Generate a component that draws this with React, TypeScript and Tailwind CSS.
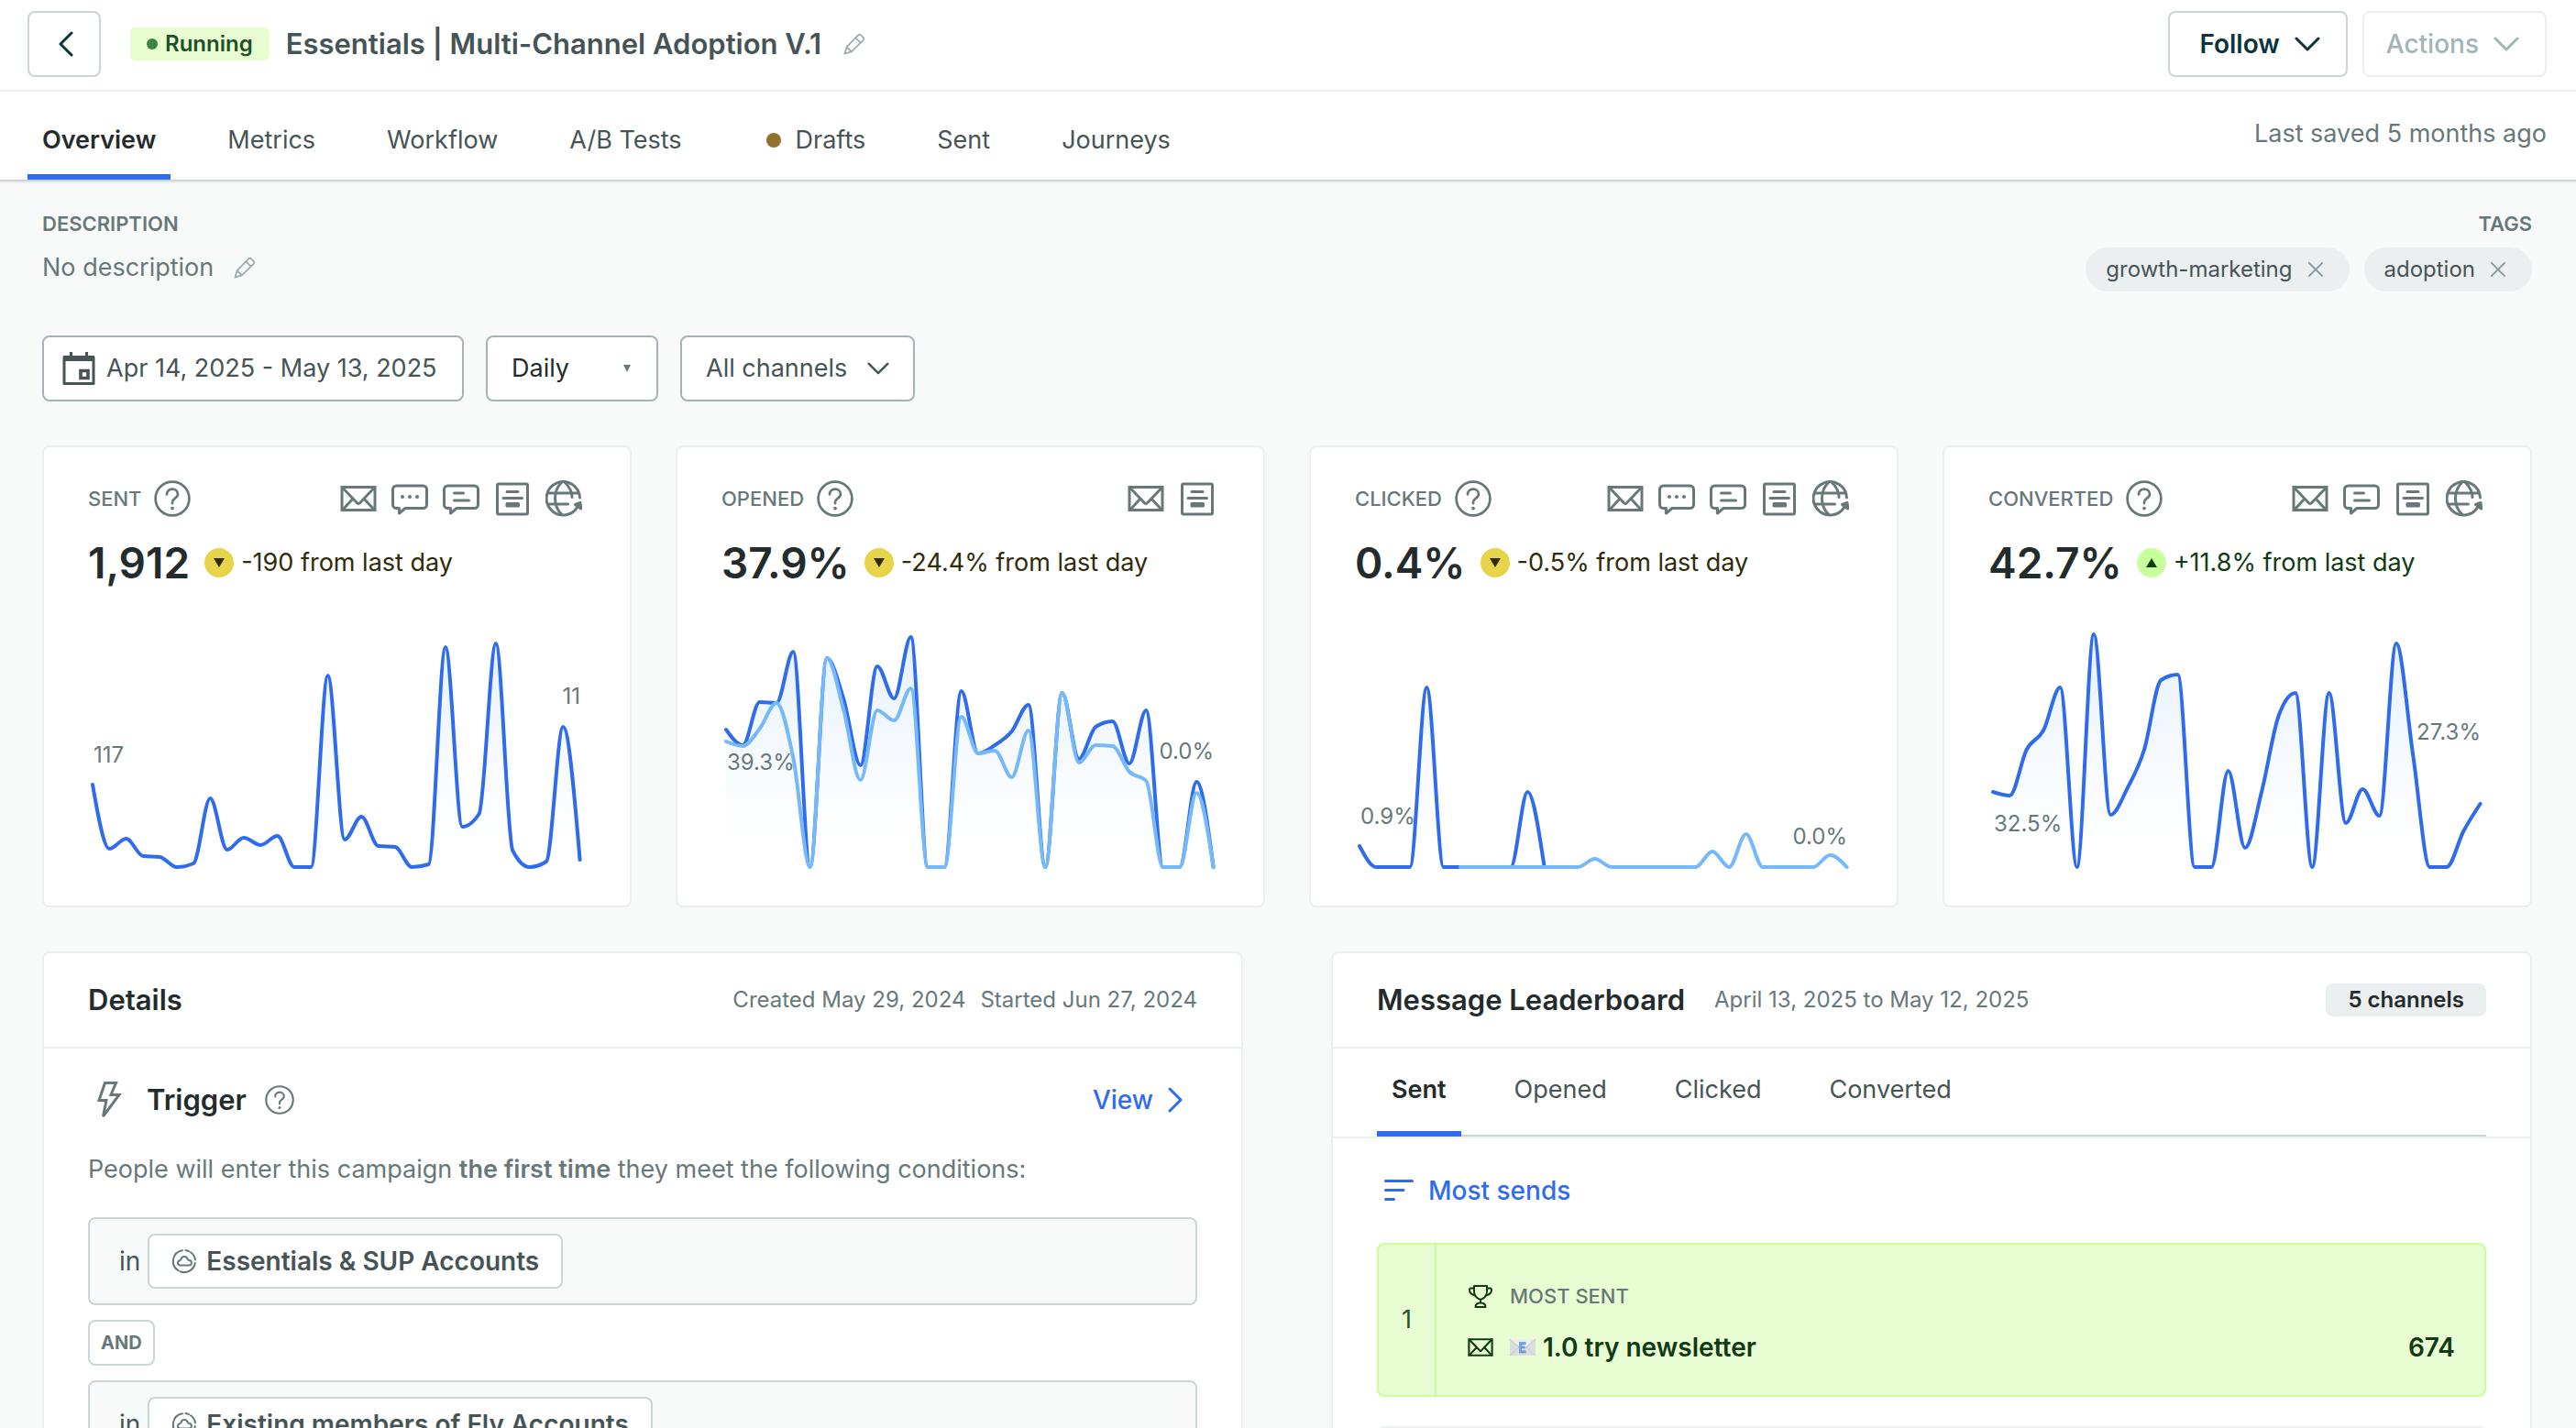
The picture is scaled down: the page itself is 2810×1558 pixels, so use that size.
import { useState } from 'react';
import type { ReactNode } from 'react';

type Channel = 'email' | 'sms' | 'push' | 'inApp' | 'webhook';

interface Label {
  text: string;
  y: number;
}

interface Metric {
  id: string;
  title: string;
  value: string;
  trend: 'up' | 'down';
  change: string;
  channels: Channel[];
  series: number[];
  secondary?: number[];
  secondaryFrom?: number;
  first: Label;
  last: Label;
}

const tabs = ['Overview', 'Metrics', 'Workflow', 'A/B Tests', 'Drafts', 'Sent', 'Journeys'];
const boardTabs = ['Sent', 'Opened', 'Clicked', 'Converted'];
const tags = ['growth-marketing', 'adoption'];
const segments = ['Essentials & SUP Accounts', 'Existing members of Fly Accounts'];

const metrics: Metric[] = [
  {
    id: 'sent',
    title: 'SENT',
    value: '1,912',
    trend: 'down',
    change: '-190 from last day',
    channels: ['email', 'sms', 'push', 'inApp', 'webhook'],
    series: [90, 20, 31, 12, 11, 0, 4, 75, 19, 32, 24, 34, 0, 0, 209, 30, 55, 23, 22, 0, 3, 240, 44, 58, 244, 18, 0, 6, 153, 8],
    first: { text: '117', y: 152 },
    last: { text: '11', y: 88 },
  },
  {
    id: 'opened',
    title: 'OPENED',
    value: '37.9%',
    trend: 'down',
    change: '-24.4% from last day',
    channels: ['email', 'inApp'],
    series: [150, 133, 180, 179, 235, 0, 228, 183, 111, 219, 184, 251, 0, 0, 192, 124, 133, 148, 177, 0, 190, 118, 153, 159, 113, 171, 0, 0, 93, 0],
    secondary: [137, 132, 151, 179, 119, 0, 228, 171, 95, 171, 160, 195, 0, 0, 164, 124, 127, 98, 149, 0, 190, 114, 133, 132, 104, 94, 0, 0, 81, 0],
    first: { text: '39.3%', y: 160 },
    last: { text: '0.0%', y: 148 },
  },
  {
    id: 'clicked',
    title: 'CLICKED',
    value: '0.4%',
    trend: 'down',
    change: '-0.5% from last day',
    channels: ['email', 'sms', 'push', 'inApp', 'webhook'],
    series: [23, 0, 0, 0, 196, 0, 0, 0, 0, 0, 82, 0],
    secondary: [0, 0, 0, 0, 0, 0, 0, 0, 9, 0, 0, 0, 0, 0, 0, 17, 0, 36, 0, 0, 0, 0, 13, 0],
    secondaryFrom: 6,
    first: { text: '0.9%', y: 219 },
    last: { text: '0.0%', y: 241 },
  },
  {
    id: 'converted',
    title: 'CONVERTED',
    value: '42.7%',
    trend: 'up',
    change: '+11.8% from last day',
    channels: ['email', 'push', 'inApp', 'webhook'],
    series: [82, 78, 128, 149, 196, 0, 254, 57, 86, 128, 204, 210, 0, 0, 105, 21, 83, 165, 190, 0, 190, 48, 85, 56, 244, 122, 0, 0, 39, 69],
    first: { text: '32.5%', y: 227 },
    last: { text: '27.3%', y: 127 },
  },
];

const CHART_BASE = 266;
const CHART_LEFT = 5;
const CHART_STEP = 18.33;

// monotone cubic interpolation, so that the curve never overshoots a day
function linePath(values: number[], from = 0) {
  const pts = values.map((v, i) => [CHART_LEFT + (i + from) * CHART_STEP, CHART_BASE - v]);
  const slopes = pts.slice(1).map((p, i) => (p[1] - pts[i][1]) / (p[0] - pts[i][0]));
  const tangents = pts.map((_, i) => {
    if (i === 0 || i === pts.length - 1) return 0;
    const a = slopes[i - 1];
    const b = slopes[i];
    if (a * b <= 0) return 0;
    return Math.sign(a) * Math.min(Math.abs(a), Math.abs(b), 0.25 * Math.abs(a + b)) * 2;
  });
  const n = pts.length - 1;
  tangents[0] = (3 * slopes[0] - tangents[1]) / 2;
  tangents[n] = (3 * slopes[n - 1] - tangents[n - 1]) / 2;

  let d = `M${pts[0][0]},${pts[0][1]}`;
  for (let i = 0; i < n; i++) {
    const dx = (pts[i + 1][0] - pts[i][0]) / 3;
    const [x0, y0] = pts[i];
    const [x1, y1] = pts[i + 1];
    d += `C${x0 + dx},${y0 + dx * tangents[i]},${x1 - dx},${y1 - dx * tangents[i + 1]},${x1},${y1}`;
  }
  return d;
}

function areaPath(values: number[], from = 0) {
  const start = CHART_LEFT + from * CHART_STEP;
  const end = CHART_LEFT + (from + values.length - 1) * CHART_STEP;
  return `${linePath(values, from)}L${end},${CHART_BASE}L${start},${CHART_BASE}Z`;
}

function Icon({ className, size = 40, width = 3, children }: { className?: string; size?: number; width?: number; children: ReactNode }) {
  return (
    <svg
      viewBox={`0 0 ${size} ${size}`}
      className={className}
      fill="none"
      stroke="currentColor"
      strokeWidth={width}
      strokeLinecap="round"
      strokeLinejoin="round"
      aria-hidden="true"
    >
      {children}
    </svg>
  );
}

function HelpIcon({ className }: { className: string }) {
  return (
    <Icon className={className} width={2.7}>
      <circle cx="20" cy="20" r="18.4" />
      <path d="M14 15.5c0-3.4 2.6-5.9 6-5.9s6 2.4 6 5.6c0 4.4-6 4.4-6 8.6v1.4" />
      <circle cx="20" cy="30.6" r="1.9" fill="currentColor" stroke="none" />
    </Icon>
  );
}

function MailIcon({ className }: { className: string }) {
  return (
    <Icon className={className}>
      <path strokeLinejoin="miter" d="M2 7.5h36v25H2z" />
      <path d="M2.5 8 14 20l5 5.2q1 .8 2 0l5-5.2L37.5 8M14 20 3 32M26 20l11 12" />
    </Icon>
  );
}

function PencilIcon({ className }: { className: string }) {
  return (
    <Icon className={className} size={26} width={2}>
      <path d="M1.5 24.5 4 16.5 17.5 2.6q1.6-1.4 3.2 0l2.7 2.7q1.4 1.6 0 3.2L9.5 22z" />
      <path d="m14.5 5.8 5.8 5.8M4 16.5 9.5 22" />
    </Icon>
  );
}

function Chevron({ className }: { className: string }) {
  return (
    <svg viewBox="0 0 28 16" className={className} fill="none" stroke="currentColor" strokeWidth="3" strokeLinecap="round" strokeLinejoin="round" aria-hidden="true">
      <path d="m2 2 12 12L26 2" />
    </svg>
  );
}

function ChannelIcon({ channel }: { channel: Channel }) {
  const className = 'size-10 text-[#68787a]';
  const bubble = 'M5.5 6h29a4 4 0 0 1 4 4v16.5a4 4 0 0 1-4 4H15L8.5 36v-5.5h-3a4 4 0 0 1-4-4V10a4 4 0 0 1 4-4z';
  if (channel === 'email') return <MailIcon className={className} />;
  if (channel === 'sms') {
    return (
      <Icon className={className}>
        <path d={bubble} />
        <path d="M12 18h.01M20 18h.01M28 18h.01" strokeWidth="4" />
      </Icon>
    );
  }
  if (channel === 'push') {
    return (
      <Icon className={className}>
        <path d={bubble} />
        <path d="M12.5 14h10M12.5 22h16" />
      </Icon>
    );
  }
  if (channel === 'inApp') {
    return (
      <Icon className={className}>
        <rect x="3.5" y="4" width="33" height="33" rx="1.5" />
        <path d="M14 12.5h12M10 19.5h20.5" />
        <rect x="14" y="25.5" width="12.5" height="2.5" />
      </Icon>
    );
  }
  return (
    <Icon className={className}>
      <path d="M37.5 19A18.2 18.2 0 1 0 35 29" />
      <path d="M18 2C8 11 8 28.5 18 37.5M21 2c5 5 8 11 8 16.5M3.5 14H35M3.5 26h21" />
      <path d="M32.5 26.5 38 24.5l.8 6.5z" fill="currentColor" />
    </Icon>
  );
}

function SegmentIcon() {
  return (
    <Icon className="size-7 shrink-0 text-[#68787a]" size={28} width={2}>
      <path d="M12 2.2A12 12 0 0 0 7.5 24.2M9.5 25.2A12 12 0 0 0 25.8 16M26 12.5A12 12 0 0 0 21 4.3M19 3.2A12 12 0 0 0 15.5 2.1" />
      <path d="M9.5 18.5H19a2.7 2.7 0 0 0 .3-5.4c-1-.2-1.3-.6-1.6-1.5-1.3-3.4-6-3.4-7.1-.1-.3 1-.7 1.4-1.6 1.7-3 .9-2.5 5.3.5 5.3z" />
    </Icon>
  );
}

function TrophyIcon() {
  return (
    <Icon className="size-7 text-[#0f3a14]" size={28} width={2}>
      <path d="M7 3h14v6c0 4-2.5 7.5-7 9-4.5-1.5-7-5-7-9z" />
      <path d="M7 5.5H3.5Q2 5.5 2 7.5q0 4.5 6.5 6M21 5.5h3.5q1.5 0 1.5 2 0 4.5-6.5 6M14 18v3.5M8.5 26c0-3 2.5-4.5 5.5-4.5s5.5 1.5 5.5 4.5z" />
    </Icon>
  );
}

function EmailEmoji() {
  return (
    <svg viewBox="0 0 28 18" className="h-[18px] w-7" aria-hidden="true">
      <rect width="28" height="18" rx="1" fill="#dcdde0" />
      <path d="M0 0h28L14 11z" fill="#eceded" />
      <path d="M0 0l10 9M28 0 18 9M0 18l10-9M28 18 18 9" stroke="#bfc1c4" fill="none" />
      <path d="M17.5 4.5h-6V14h6M11.5 9h5" stroke="#5b7fb4" strokeWidth="2.6" fill="none" />
      <path d="M17 4h-6v9.5h6M11 8.5h5" stroke="#6aa9f5" strokeWidth="2" fill="none" />
    </svg>
  );
}

function Chart({ metric }: { metric: Metric }) {
  const fill = `fill-${metric.id}`;
  return (
    <svg viewBox="0 0 543 268" className="mt-9 block w-full" role="img" aria-label={`${metric.title} per day`}>
      <defs>
        <linearGradient id={fill} gradientUnits="userSpaceOnUse" x1="0" y1="0" x2="0" y2="240">
          <stop offset="0" stopColor="#e4effd" />
          <stop offset="0.6" stopColor="#f6faff" />
          <stop offset="1" stopColor="#ffffff" />
        </linearGradient>
      </defs>
      <path d={areaPath(metric.series)} fill={`url(#${fill})`} />
      {metric.secondary && <path d={areaPath(metric.secondary, metric.secondaryFrom)} fill={`url(#${fill})`} />}
      <path d={linePath(metric.series)} fill="none" stroke="#2f6bed" strokeWidth="4" strokeLinecap="round" />
      {metric.secondary && (
        <path d={linePath(metric.secondary, metric.secondaryFrom)} fill="none" stroke="#76b9fa" strokeWidth="4" strokeLinecap="round" />
      )}
      <g fontSize="24" fill="#68787a">
        <text x="6" y={metric.first.y}>{metric.first.text}</text>
        <text x="537" y={metric.last.y} textAnchor="end">{metric.last.text}</text>
      </g>
    </svg>
  );
}

function MetricCard({ metric }: { metric: Metric }) {
  const down = metric.trend === 'down';
  return (
    <section className="rounded-lg border-2 border-[#ebefef] bg-white px-12 pt-9 pb-10">
      <div className="flex items-center justify-between">
        <div className="flex items-center gap-3.5">
          <h2 className="text-[22px] leading-8 font-medium text-[#68787a]">{metric.title}</h2>
          <button type="button" aria-label={`About ${metric.title}`} className="text-[#68787a]">
            <HelpIcon className="size-10" />
          </button>
        </div>
        <div className="mr-1 flex gap-4">
          {metric.channels.map((channel) => (
            <ChannelIcon key={channel} channel={channel} />
          ))}
        </div>
      </div>
      <div className="mt-5 flex items-center">
        <span className="text-[46px] leading-[60px] font-semibold text-[#232b2c]">{metric.value}</span>
        <span className={`ml-4 flex size-8 items-center justify-center rounded-full ${down ? 'bg-[#e8d44a]' : 'bg-[#c6ff9c]'}`}>
          <svg viewBox="0 0 12 10" className="h-2.5 w-3" aria-hidden="true">
            <path d={down ? 'M0 0h12L6 10z' : 'M0 10h12L6 0z'} fill={down ? '#302b0a' : '#0f3a14'} />
          </svg>
        </span>
        <span className={`ml-2 text-[27px] ${down ? 'text-[#302b0a]' : 'text-[#0f3a14]'}`}>{metric.change}</span>
      </div>
      <Chart metric={metric} />
    </section>
  );
}

function Header() {
  return (
    <header className="flex h-[100px] items-start border-b-2 border-[#ebefef] pt-3 pr-8 pl-[30px]">
      <button type="button" aria-label="Back" className="flex h-[72px] w-20 items-center justify-center rounded-lg border-2 border-[#cbd5d8] pl-1 text-[#0b353b]">
        <svg viewBox="0 0 16 28" className="h-7 w-4" fill="none" stroke="currentColor" strokeWidth="3" strokeLinecap="round" strokeLinejoin="round" aria-hidden="true">
          <path d="M14 2 2 14l12 12" />
        </svg>
      </button>
      <div className="flex h-[72px] grow items-center pl-8">
        <span className="flex h-9 items-center gap-2 rounded-md bg-[#e9fdd3] px-[18px] text-2xl font-semibold text-[#1e5128]">
          <span className="size-3 rounded-full bg-[#38863f]" />
          Running
        </span>
        <h1 className="ml-[18px] text-[31px] font-semibold text-[#465456]">Essentials | Multi-Channel Adoption V.1</h1>
        <button type="button" aria-label="Edit name" className="ml-6 text-[#9fadaf]">
          <PencilIcon className="size-6" />
        </button>
      </div>
      <div className="flex gap-4 text-[28px]">
        <button type="button" className="flex h-[72px] items-center gap-4 rounded-lg border-2 border-[#cbd5d8] pr-7 pl-8 font-semibold text-[#0b353b]">
          Follow
          <Chevron className="h-4 w-7" />
        </button>
        <button type="button" disabled className="flex h-[72px] items-center gap-4 rounded-lg border-2 border-[#ebefef] pr-7 pl-6 font-medium text-[#a3b4b6]">
          Actions
          <Chevron className="h-4 w-7" />
        </button>
      </div>
    </header>
  );
}

function Nav({ active, onChange }: { active: string; onChange: (tab: string) => void }) {
  return (
    <div className="flex justify-between border-b-2 border-[#ebefef] pr-8 pl-[30px] text-[27px] shadow-[inset_0_-2px_0_#cbd5d8]">
      <nav className="flex h-[98px] gap-[46px]">
        {tabs.map((tab) => (
          <a
            key={tab}
            href="#"
            onClick={() => onChange(tab)}
            className={
              tab === active
                ? 'mb-0.5 flex items-center border-b-6 border-[#2f6bed] px-4 pt-4 font-semibold text-[#232b2c]'
                : 'mb-0.5 flex items-center border-b-6 border-transparent px-4 pt-4 text-[#465456]'
            }
          >
            {tab === 'Drafts' && <span className="mr-4 ml-3.5 size-4 rounded-full bg-[#93702f]" />}
            {tab}
          </a>
        ))}
      </nav>
      <span className="pt-[26px] text-[#68787a]">Last saved 5 months ago</span>
    </div>
  );
}

function Summary() {
  return (
    <div className="flex justify-between">
      <div>
        <h2 className="text-[22px] leading-8 font-semibold text-[#68787a]">DESCRIPTION</h2>
        <div className="mt-3 flex items-center gap-[22px]">
          <span className="text-[27px] leading-10 text-[#68787a]">No description</span>
          <button type="button" aria-label="Edit description" className="text-[#9fadaf]">
            <PencilIcon className="size-6" />
          </button>
        </div>
      </div>
      <div className="flex flex-col items-end">
        <h2 className="text-[22px] leading-8 font-semibold text-[#68787a]">TAGS</h2>
        <ul className="mt-2.5 flex gap-4">
          {tags.map((tag) => (
            <li key={tag} className="flex h-12 items-center gap-4 rounded-full bg-[#ebeff0] pr-7 pl-[22px] text-2xl text-[#465456]">
              {tag}
              <button type="button" aria-label={`Remove ${tag}`} className="text-[#84949a]">
                <Icon className="size-[18px]" size={20} width={2}>
                  <path d="m2 2 16 16M18 2 2 18" />
                </Icon>
              </button>
            </li>
          ))}
        </ul>
      </div>
    </div>
  );
}

function Filters() {
  return (
    <div className="mt-12 flex gap-6 text-[27px]">
      <label className="flex h-[72px] w-[460px] items-center rounded-lg border-2 border-[#a3b4b6] bg-white pr-6 pl-5 text-[#465456]">
        <svg viewBox="0 0 36 40" className="h-10 w-9 shrink-0" aria-hidden="true">
          <path d="M2 8h32v28.5H2z" fill="none" stroke="currentColor" strokeWidth="3" strokeLinejoin="round" />
          <path d="M1 6h34v6H1zM8 2h3v6H8zM25 2h3v6h-3z" fill="currentColor" />
          <path d="M20 22.5h8v8h-8z" fill="none" stroke="currentColor" strokeWidth="3.6" />
        </svg>
        <input type="text" readOnly aria-label="Date range" value="Apr 14, 2025 - May 13, 2025" className="ml-3 h-10 w-full min-w-0 outline-none" />
      </label>
      <label className="relative flex h-[72px] w-[188px] items-center rounded-lg border-2 border-[#a3b4b6] bg-white text-[#232b2c]">
        <select aria-label="Interval" defaultValue="Daily" className="size-full appearance-none pl-[26px] outline-none">
          <option>Daily</option>
          <option>Weekly</option>
          <option>Monthly</option>
        </select>
        <svg viewBox="0 0 8 8" className="pointer-events-none absolute right-7 size-2" aria-hidden="true">
          <path d="M0 0h8L4 8z" fill="#68787a" />
        </svg>
      </label>
      <button type="button" className="flex h-[72px] items-center gap-[22px] rounded-lg border-2 border-[#a3b4b6] bg-white px-[26px] text-[#465456]">
        All channels
        <Chevron className="h-3.5 w-6" />
      </button>
    </div>
  );
}

function Details() {
  return (
    <section className="rounded-lg border-2 border-[#ebefef] bg-white">
      <div className="flex h-[104px] items-center justify-between border-b-2 border-[#ebefef] px-12">
        <h2 className="text-[31px] font-semibold text-[#232b2c]">Details</h2>
        <div className="flex gap-4 text-2xl text-[#68787a]">
          <span>Created May 29, 2024</span>
          <span>Started Jun 27, 2024</span>
        </div>
      </div>
      <div className="px-12 pt-8 pb-12">
        <div className="flex items-center">
          <Icon className="h-10 w-12 text-[#68787a]">
            <path strokeLinejoin="miter" d="M14.5 1.5h12L21 14.5h9L12.5 38 16 20.5H8z" />
          </Icon>
          <h3 className="ml-4 text-[31px] leading-[48px] font-semibold text-[#232b2c]">Trigger</h3>
          <button type="button" aria-label="About triggers" className="ml-5 text-[#68787a]">
            <HelpIcon className="size-8" />
          </button>
          <a href="#" className="mr-4 ml-auto flex items-center gap-4 text-[28px] font-medium text-[#2f6bed]">
            View
            <svg viewBox="0 0 16 28" className="h-7 w-4" fill="none" stroke="currentColor" strokeWidth="3" strokeLinecap="round" strokeLinejoin="round" aria-hidden="true">
              <path d="m2 2 12 12L2 26" />
            </svg>
          </a>
        </div>
        <p className="mt-8 text-[27px] leading-10 text-[#68787a]">
          People will enter this campaign <b className="font-semibold">the first time</b> they meet the following conditions:
        </p>
        <div className="mt-8 flex flex-col items-start gap-4">
          {segments.map((segment, i) => (
            <div key={segment} className="contents">
              {i > 0 && (
                <span className="flex h-[50px] items-center rounded-lg border-2 border-[#cbd5d8] px-3 text-xl font-bold text-[#68787a]">AND</span>
              )}
              <div className="flex h-24 w-full items-center gap-2 rounded-lg border-2 border-[#cbd5d8] bg-[#f8faf9] px-8 text-[28px] text-[#465456]">
                in
                <a href="#" className="flex h-[60px] items-center gap-2.5 rounded-lg border-2 border-[#cbd5d8] bg-white px-6 font-semibold">
                  <SegmentIcon />
                  {segment}
                </a>
              </div>
            </div>
          ))}
        </div>
      </div>
    </section>
  );
}

function Leaderboard() {
  const [active, setActive] = useState('Sent');

  return (
    <section className="rounded-lg border-2 border-[#ebefef] bg-white">
      <div className="flex h-[104px] items-center border-b-2 border-[#ebefef] px-12">
        <h2 className="text-[31px] font-semibold text-[#232b2c]">Message Leaderboard</h2>
        <span className="ml-8 text-2xl text-[#68787a]">April 13, 2025 to May 12, 2025</span>
        <span className="ml-auto flex h-9 items-center rounded-lg bg-[#ebeff0] px-6 text-2xl font-semibold text-[#232b2c]">5 channels</span>
      </div>
      <div className="border-b-2 border-[#ebefef] px-12">
        <div role="tablist" className="flex h-24 gap-[42px] text-[27px] shadow-[inset_0_-2px_0_#cbd5d8]">
          {boardTabs.map((tab) => (
            <button
              key={tab}
              type="button"
              role="tab"
              aria-selected={tab === active}
              onClick={() => setActive(tab)}
              className={
                tab === active
                  ? 'border-b-6 border-[#2f6bed] px-4 font-semibold text-[#232b2c]'
                  : 'border-b-6 border-transparent px-4 text-[#465456]'
              }
            >
              {tab}
            </button>
          ))}
        </div>
      </div>
      <div className="px-12 pt-9">
        <button type="button" className="ml-2 flex items-center gap-4 text-[28px] leading-[42px] font-medium text-[#2f6bed]">
          <Icon className="size-8" size={32}>
            <path d="M1.5 5.5h29M1.5 15.5H21M1.5 25.5h9" />
          </Icon>
          Most sends
        </button>
        <ol className="mt-9 flex flex-col gap-8">
          <li className="flex h-[168px] rounded-lg border-2 border-[#c6ff9c] bg-[#e9fdd3]">
            <span className="flex w-[63px] items-center justify-center border-r-2 border-[#c6ff9c] text-[27px] text-[#1e5128]">1</span>
            <div className="flex grow flex-col justify-center gap-4 pt-1 pr-8 pl-[34px]">
              <div className="flex items-center gap-[18px]">
                <TrophyIcon />
                <span className="text-[22px] leading-10 font-medium text-[#68787a]">MOST SENT</span>
              </div>
              <div className="flex items-center text-[28px] leading-10 font-semibold text-[#0f3a14]">
                <MailIcon className="size-7" />
                <span className="ml-[18px] flex items-center gap-2">
                  <EmailEmoji />
                  1.0 try newsletter
                </span>
                <span className="ml-auto">674</span>
              </div>
            </div>
          </li>
          <li className="flex h-[168px] rounded-lg border-2 border-[#ebefef] bg-white"></li>
        </ol>
      </div>
    </section>
  );
}

function App() {
  const [tab, setTab] = useState('Overview');

  return (
    <div className="h-screen overflow-hidden bg-[#f8faf9] font-['Inter','Liberation_Sans',sans-serif]">
      <div className="bg-white">
        <Header />
        <Nav active={tab} onChange={setTab} />
      </div>
      <main className="pt-7 pr-12 pl-[46px]">
        <Summary />
        <Filters />
        <div className="mt-12 grid grid-cols-4 gap-12">
          {metrics.map((metric) => (
            <MetricCard key={metric.id} metric={metric} />
          ))}
        </div>
        <div className="mt-12 grid grid-cols-2 gap-24">
          <Details />
          <Leaderboard />
        </div>
      </main>
    </div>
  );
}

export default App;
